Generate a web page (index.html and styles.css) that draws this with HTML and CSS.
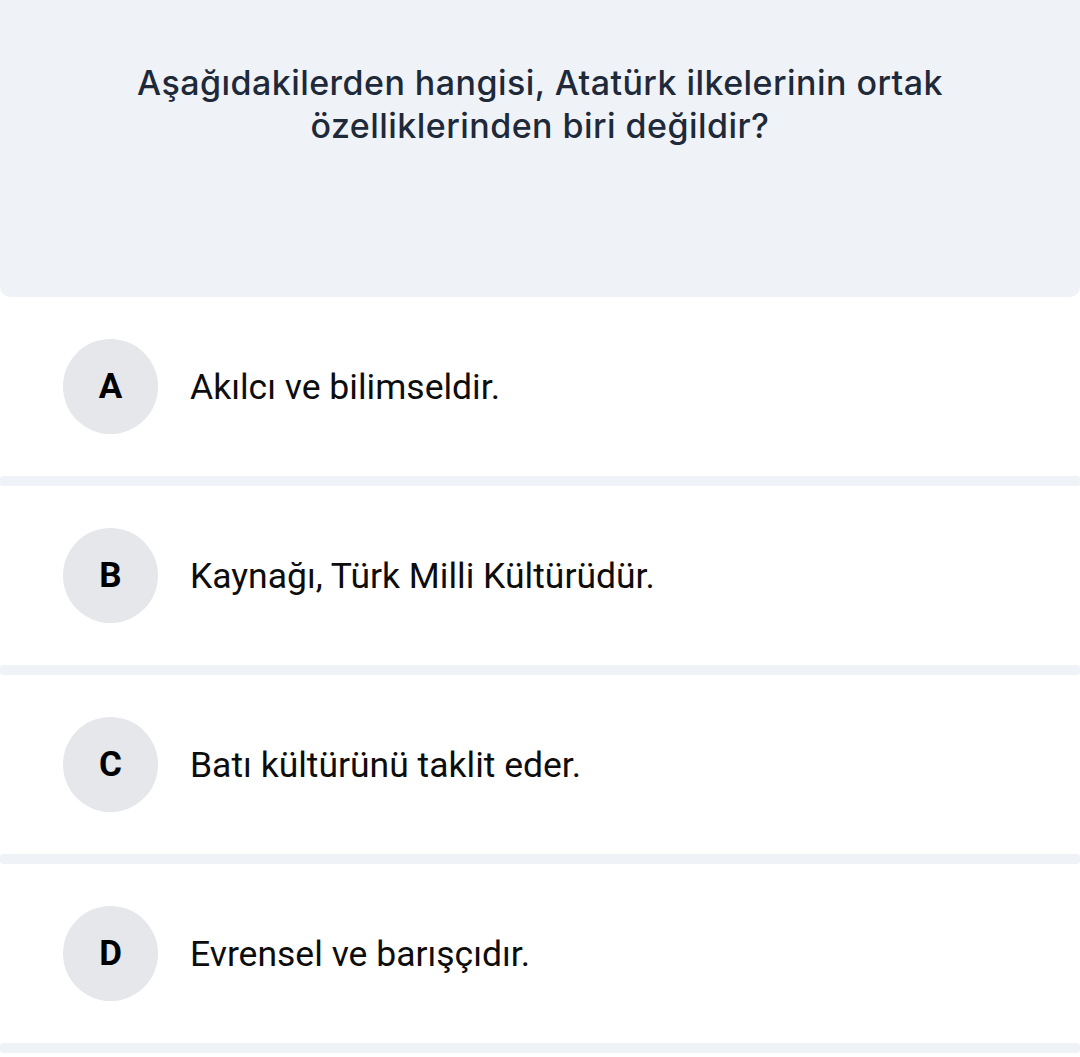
FILE: index.html
```html
<!DOCTYPE html>
<html lang="tr">
<head>
    <meta charset="UTF-8">
    <meta name="viewport" content="width=device-width, initial-scale=1.0">
    <title>Soru</title>
    <link rel="stylesheet" href="styles.css">
</head>
<body>
    <div class="question">
        <p>Aşağıdakilerden hangisi, Atatürk ilkelerinin ortak özelliklerinden biri değildir?</p>
    </div>

    <div class="options">
        <div class="option">
            <div class="letter">A</div>
            <div class="answer">Akılcı ve bilimseldir.</div>
        </div>
        <div class="divider"></div>
        <div class="option">
            <div class="letter">B</div>
            <div class="answer">Kaynağı, Türk Milli Kültürüdür.</div>
        </div>
        <div class="divider"></div>
        <div class="option">
            <div class="letter">C</div>
            <div class="answer">Batı kültürünü taklit eder.</div>
        </div>
        <div class="divider"></div>
        <div class="option">
            <div class="letter">D</div>
            <div class="answer">Evrensel ve barışçıdır.</div>
        </div>
        <div class="divider"></div>
    </div>
</body>
</html>
```

FILE: styles.css
```css
* {
    box-sizing: border-box;
}

body {
    margin: 0;
    padding: 0;
    background-color: #ffffff;
    font-family: Roboto, "Liberation Sans", sans-serif;
}

.question {
    height: 297px;
    background-color: #eff3f8;
    border-radius: 0 0 10px 10px;
    padding: 61px 100px 0;
}

.question p {
    margin: 0;
    font-family: Inter, "Noto Sans", sans-serif;
    font-weight: 500;
    font-size: 34px;
    line-height: 43px;
    letter-spacing: 0.45px;
    color: #1e2939;
    text-align: center;
}

.option {
    height: 179px;
    display: flex;
    align-items: center;
    padding-left: 63px;
    gap: 32px;
}

.letter {
    width: 95px;
    height: 95px;
    flex-shrink: 0;
    border-radius: 50%;
    background-color: #e5e7eb;
    display: flex;
    align-items: center;
    justify-content: center;
    font-weight: 700;
    font-size: 35px;
    color: #000000;
}

.answer {
    font-size: 35.5px;
    color: #0d0d0d;
}

.divider {
    height: 10px;
    background-color: #eff2f7;
    border-radius: 3px;
}
```
